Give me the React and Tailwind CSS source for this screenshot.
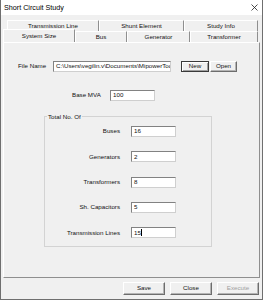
import React from 'react'

const backTabs = [
  { label: 'Transmission Line', w: 'w-[92px]' },
  { label: 'Shunt Element', w: 'w-[85px]' },
  { label: 'Study Info', w: 'w-[74px]' },
]

const frontTabs = [
  { label: 'System Size', w: 'w-[72px]', active: true },
  { label: 'Bus', w: 'w-[52px]' },
  { label: 'Generator', w: 'w-[63px]' },
  { label: 'Transformer', w: 'w-[68px]' },
]

const fields = [
  { label: 'Buses', value: '16' },
  { label: 'Generators', value: '2' },
  { label: 'Transformers', value: '8' },
  { label: 'Sh. Capacitors', value: '5' },
  { label: 'Transmission Lines', value: '15', caret: true },
]

const tabBase =
  'flex items-center justify-center border-t border-l border-r border-t-white border-l-white border-r-[#8f8f8f] bg-[#f0f0f0] text-[6.2px] leading-none text-[#111]'

const sunken =
  'flex items-center overflow-hidden whitespace-nowrap border border-t-[#828282] border-l-[#828282] border-r-[#cfcfcf] border-b-[#cfcfcf] bg-white pl-[2px] text-[6.2px] leading-none text-[#111]'

const raised =
  'flex items-center justify-center border border-t-white border-l-white border-r-[#6d6d6d] border-b-[#6d6d6d] bg-[#f0f0f0] shadow-[inset_-1px_-1px_0_#b4b4b4] text-[6.2px] leading-none'

function TextBox({ value, width, caret }) {
  return (
    <div className={`${sunken} ${width} h-[11px]`}>
      <span>{value}</span>
      {caret && <span className="ml-[0.5px] h-[7px] w-px bg-black" />}
    </div>
  )
}

export default function App() {
  return (
    <div className="flex h-[300px] w-[263px] flex-col border-x border-b border-[#6f6f6f] bg-[#f0f0f0] font-['Liberation_Sans',Arial,sans-serif] text-[#111]">
      {/* Title bar */}
      <div className="flex h-[15px] shrink-0 items-center justify-between bg-white pl-[3px] pr-[4px]">
        <span className="text-[7.2px] leading-none text-black">Short Circuit Study</span>
        <svg width="7" height="7" viewBox="0 0 7 7">
          <path d="M0.5 0.5 L6.5 6.5 M6.5 0.5 L0.5 6.5" stroke="#222" strokeWidth="0.8" />
        </svg>
      </div>

      {/* Tabs */}
      <div className="mt-[5px] flex h-[11px] shrink-0 pl-[6px]">
        {backTabs.map(tab => (
          <div key={tab.label} className={`${tabBase} ${tab.w} h-[11px]`}>
            {tab.label}
          </div>
        ))}
      </div>
      <div className="flex h-[11px] shrink-0 items-end pl-[2px]">
        {frontTabs.map(tab => (
          <div
            key={tab.label}
            className={`${tabBase} ${tab.w} ${tab.active ? 'relative z-10 h-[13px]' : 'h-[11px]'}`}
          >
            {tab.label}
          </div>
        ))}
      </div>

      {/* Panel */}
      <div className="ml-[2px] flex h-[236px] w-[257px] shrink-0 flex-col border border-t-white border-l-white border-r-[#8f8f8f] border-b-[#8f8f8f]">
        {/* File name */}
        <div className="mt-[18px] flex h-[11px] items-center pl-[14px]">
          <span className="w-[35px] text-[6.2px] leading-none">File Name</span>
          <TextBox value="C:\Users\vegilin.v\Documents\MipowerTools" width="w-[118px]" />
          <button className="ml-[10px] flex h-[11px] w-[28px] items-center justify-center border border-[#3a3a3a] bg-[#f0f0f0] text-[6.2px] leading-none shadow-[inset_1px_1px_0_#fff,inset_-1px_-1px_0_#a0a0a0]">
            New
          </button>
          <button className={`${raised} ml-[1px] h-[11px] w-[27px]`}>Open</button>
        </div>

        {/* Base MVA */}
        <div className="mt-[18px] flex h-[11px] items-center pl-[68px]">
          <span className="w-[38px] text-[6.2px] leading-none">Base MVA</span>
          <TextBox value="100" width="w-[45px]" />
        </div>

        {/* Total No. Of group */}
        <div className="relative ml-[40px] mt-[15px] flex w-[168px] flex-col gap-[14.3px] border border-[#d3d3d3] pb-[8px] pt-[9px]">
          <span className="absolute -top-[4px] left-[2px] bg-[#f0f0f0] px-[1px] text-[6.2px] leading-[7px]">
            Total No. Of
          </span>
          {fields.map(field => (
            <div key={field.label} className="flex h-[11px] items-center">
              <span className="w-[75px] text-right text-[6.2px] leading-none">{field.label}</span>
              <div className="ml-[11px]">
                <TextBox value={field.value} width="w-[45px]" caret={field.caret} />
              </div>
            </div>
          ))}
        </div>
      </div>

      {/* Bottom buttons */}
      <div className="mt-[4px] flex shrink-0 justify-end gap-[5px] pr-[3px]">
        <button className={`${raised} h-[13px] w-[42px]`}>Save</button>
        <button className={`${raised} h-[13px] w-[42px]`}>Close</button>
        <button className={`${raised} h-[13px] w-[42px] text-[#a0a0a0]`}>Execute</button>
      </div>
    </div>
  )
}
